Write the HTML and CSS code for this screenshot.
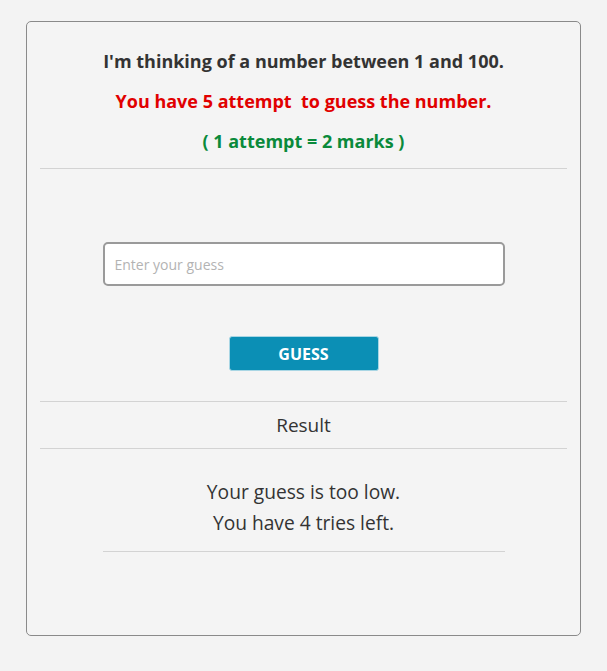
FILE: index.html
```html
<!DOCTYPE html>
<html>
<head>
<meta charset="utf-8">
<link rel="stylesheet" href="styles.css">
</head>
<body>
<div class="card">
  <div class="intro">
    <p class="title">I'm thinking of a number between 1 and 100.</p>
    <p class="attempts">You have 5 attempt&nbsp; to guess the number.</p>
    <p class="marks">( 1 attempt = 2 marks )</p>
  </div>
  <hr class="rule">
  <div class="form">
    <input class="guess-input" type="text" placeholder="Enter your guess">
    <button class="guess-btn">GUESS</button>
  </div>
  <hr class="rule">
  <div class="result-head">Result</div>
  <hr class="rule">
  <div class="result">
    <p>Your guess is too low.</p>
    <p>You have 4 tries left.</p>
  </div>
  <hr class="rule short">
</div>
</body>
</html>
```

FILE: styles.css
```css
html, body {
  margin: 0;
  padding: 0;
  background: #f3f3f3;
}
body {
  font-family: "Open Sans", "Noto Sans", sans-serif;
  color: #333;
  padding-top: 21px;
}
.card {
  box-sizing: border-box;
  width: 555px;
  height: 615px;
  margin: 0 auto;
  border: 1px solid #8a8a8a;
  border-radius: 5px;
  background: #f4f4f4;
  padding: 0 13px;
  display: flex;
  flex-direction: column;
}
.intro {
  text-align: center;
  padding-top: 26px;
}
.intro p {
  margin: 0;
  font-weight: 700;
  font-size: 18px;
  line-height: 26px;
}
.intro p + p {
  margin-top: 14px;
}
.title { color: #333; }
.attempts { color: #e10000; }
.marks { color: #0a8a3b; }
.rule {
  border: 0;
  border-top: 1px solid #d3d3d3;
  margin: 0;
  height: 0;
  align-self: stretch;
}
.intro + .rule { margin-top: 14px; }
.form {
  display: flex;
  flex-direction: column;
  align-items: center;
  padding-top: 73px;
  padding-bottom: 30px;
}
.guess-input {
  box-sizing: border-box;
  width: 402px;
  height: 44px;
  border: 2px solid #9a9a9a;
  border-radius: 5px;
  background: #fff;
  padding: 0 10px;
  font-family: inherit;
  font-size: 14px;
  color: #333;
  outline: none;
}
.guess-input::placeholder { color: #b3b3b3; }
.guess-btn {
  margin-top: 50px;
  width: 150px;
  height: 35px;
  border: 1px solid #a9d6e4;
  border-radius: 3px;
  background: #0b8fb5;
  color: #fff;
  font-family: inherit;
  font-weight: 700;
  font-size: 16px;
  padding: 0;
}
.result-head {
  text-align: center;
  font-size: 19px;
  line-height: 47px;
  height: 46px;
}
.result {
  text-align: center;
  padding-top: 27px;
  padding-bottom: 13px;
}
.result p {
  margin: 0;
  font-size: 19.2px;
  line-height: 31px;
}
.rule.short {
  align-self: center;
  width: 402px;
}
```
